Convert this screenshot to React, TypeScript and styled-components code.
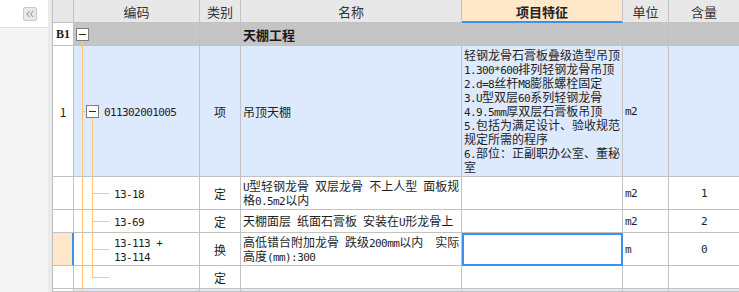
import React from "react";
import styled, { createGlobalStyle, css } from "styled-components";

const GlobalStyle = createGlobalStyle`
  html, body { margin: 0; padding: 0; background: #ffffff; overflow: hidden; }
  body { font-family: "Noto Sans CJK SC", "Noto Sans", sans-serif; font-size: 12px; color: #1e1e1e; }
  * { box-sizing: border-box; }
`;

const ORANGE = "#ffc773";
const LINE = "#c2c2c2";
const BLUE = "#3d8ff0";
const PEACH = "#ffe8c9";
const ROW_BLUE = "#dde9fc";
const GROUP_GRAY = "#c5c5c5";
const HEAD_GRAY = "#e8e8e8";

const Page = styled.div`
  display: flex;
  width: 739px;
  height: 292px;
  overflow: hidden;
`;

const LeftPanel = styled.div`
  flex: none;
  width: 48px;
  display: flex;
  flex-direction: column;
  background: #f5f5f5;
`;

const TopBar = styled.div`
  height: 28px;
  background: #ffffff;
  border-bottom: 1px solid #e3e3e3;
  display: flex;
  justify-content: flex-end;
  align-items: center;
  padding-right: 11px;
`;

const CollapseBtn = styled.div`
  width: 14px;
  height: 14px;
  border: 1px solid #c9c9c9;
  border-radius: 2px;
  background: #e8e8e8;
  display: flex;
  align-items: center;
  justify-content: center;
`;

const Splitter = styled.div`
  flex: none;
  width: 4px;
  background: #eaeaea;
`;

const Grid = styled.div`
  flex: none;
  width: 688px;
  border-left: 1px solid #bdbdbd;
  display: grid;
  grid-template-columns: 21px 126px 41px 221px 161px 46px 71px;
  grid-template-rows: 23px 23px 131px 33px 23px 33px 23px 1fr;
`;

const BaseCell = styled.div<{ $bg?: string }>`
  min-width: 0;
  overflow: hidden;
  border-right: 1px solid ${LINE};
  border-bottom: 1px solid ${LINE};
  background-color: ${(p) => p.$bg ?? "#ffffff"};
`;

const HeadCell = styled(BaseCell)<{ $active?: boolean }>`
  display: flex;
  align-items: center;
  justify-content: center;
  font-size: 13px;
  color: #333333;
  white-space: nowrap;
  ${(p) =>
    p.$active &&
    css`
      font-weight: bold;
      color: #222222;
      border-bottom-color: ${BLUE};
      box-shadow: inset 0 -1px 0 ${BLUE};
    `}
`;

const NumCell = styled(BaseCell)<{ $selected?: boolean; $bold?: boolean }>`
  display: flex;
  align-items: center;
  justify-content: center;
  font-size: 12px;
  ${(p) =>
    p.$bold &&
    css`
      font-family: "Liberation Serif", "DejaVu Serif", serif;
      font-weight: bold;
      font-size: 12px;
    `}
  ${(p) =>
    p.$selected &&
    css`
      border-right-color: ${BLUE};
      box-shadow: inset -1px 0 0 ${BLUE};
    `}
`;

type Tree = "root" | "item" | "child" | "last" | "trunk";

const lg = `linear-gradient(${ORANGE}, ${ORANGE})`;

const treeBg: Record<Tree, { pos: string; size: string; n: number }> = {
  root: { pos: "8px 100%", size: "1px calc(100% - 18px)", n: 1 },
  item: {
    pos: "8px 0, 8px 50%, 18px 100%",
    size: "1px 100%, 4px 1px, 1px calc(50% - 6px)",
    n: 3,
  },
  child: { pos: "8px 0, 18px 0, 18px 50%", size: "1px 100%, 1px 100%, 17px 1px", n: 3 },
  last: { pos: "8px 0, 18px 0, 18px 50%", size: "1px 100%, 1px 50%, 17px 1px", n: 3 },
  trunk: { pos: "8px 0", size: "1px 100%", n: 1 },
};

const CodeCell = styled(BaseCell)<{ $tree: Tree; $indent: number }>`
  display: flex;
  align-items: center;
  gap: 5px;
  padding-left: ${(p) => p.$indent}px;
  line-height: 13px;
  white-space: nowrap;
  background-repeat: no-repeat;
  background-image: ${(p) => Array(treeBg[p.$tree].n).fill(lg).join(", ")};
  background-position: ${(p) => treeBg[p.$tree].pos};
  background-size: ${(p) => treeBg[p.$tree].size};
`;

const MinusBox = styled.span`
  flex: none;
  width: 13px;
  height: 13px;
  border: 1px solid #7d7d7d;
  background: #ffffff;
  display: flex;
  align-items: center;
  justify-content: center;
  &::before {
    content: "";
    width: 7px;
    height: 1px;
    background: #2a2a2a;
  }
`;

const CenterCell = styled(BaseCell)`
  display: flex;
  align-items: center;
  justify-content: center;
  font-size: 12px;
`;

const UnitCell = styled(BaseCell)`
  display: flex;
  align-items: center;
  padding-left: 2px;
`;

const NameCell = styled(BaseCell)<{ $bold?: boolean }>`
  display: flex;
  flex-direction: column;
  justify-content: center;
  padding-left: 2px;
  line-height: 13px;
  white-space: pre;
  ${(p) =>
    p.$bold &&
    css`
      font-weight: bold;
      font-size: 13px;
      color: #1a1a1a;
    `}
`;

const FeatureCell = styled(BaseCell)<{ $selected?: boolean }>`
  padding: 2px 0 0 2px;
  line-height: 14px;
  white-space: pre;
  ${(p) =>
    p.$selected &&
    css`
      border-right-color: ${BLUE};
      border-bottom-color: ${BLUE};
      outline: 2px solid ${BLUE};
      outline-offset: -2px;
    `}
`;

const Line = styled.div`
  white-space: pre;
`;

const Asc = styled.span`
  font-family: "DejaVu Sans Mono", "Liberation Mono", monospace;
  font-size: 11px;
  letter-spacing: -0.6px;
  line-height: 1;
`;

function T({ s }: { s: string }) {
  const parts = s.split(/([\x20-\x7e]+)/);
  return (
    <>
      {parts.map((p, i) =>
        p === "" ? null : /[\x20-\x7e]/.test(p[0]) ? (
          <Asc key={i}>{p}</Asc>
        ) : (
          <span key={i}>{p}</span>
        )
      )}
    </>
  );
}

function Lines({ lines }: { lines: string[] }) {
  return (
    <>
      {lines.map((l, i) => (
        <Line key={i}>
          <T s={l} />
        </Line>
      ))}
    </>
  );
}

type Kind = "group" | "item" | "child" | "last" | "next";

interface RowData {
  kind: Kind;
  num: string;
  code: string[];
  type: string;
  name: string[];
  feature: string[];
  unit: string;
  qty: string;
  selected?: boolean;
}

const rows: RowData[] = [
  { kind: "group", num: "B1", code: [], type: "", name: ["天棚工程"], feature: [], unit: "", qty: "" },
  {
    kind: "item",
    num: "1",
    code: ["011302001005"],
    type: "项",
    name: ["吊顶天棚"],
    feature: [
      "轻钢龙骨石膏板叠级造型吊顶",
      "1.300*600排列轻钢龙骨吊顶",
      "2.d=8丝杆M8膨胀螺栓固定",
      "3.U型双层60系列轻钢龙骨",
      "4.9.5mm厚双层石膏板吊顶",
      "5.包括为满足设计、验收规范",
      "规定所需的程序",
      "6.部位：正副职办公室、董秘",
      "室",
    ],
    unit: "m2",
    qty: "",
  },
  {
    kind: "child",
    num: "",
    code: ["13-18"],
    type: "定",
    name: ["U型轻钢龙骨 双层龙骨 不上人型 面板规", "格0.5m2以内"],
    feature: [],
    unit: "m2",
    qty: "1",
  },
  {
    kind: "child",
    num: "",
    code: ["13-69"],
    type: "定",
    name: ["天棚面层 纸面石膏板 安装在U形龙骨上"],
    feature: [],
    unit: "m2",
    qty: "2",
  },
  {
    kind: "child",
    num: "",
    code: ["13-113 +", "13-114"],
    type: "换",
    name: ["高低错台附加龙骨 跌级200mm以内  实际", "高度(mm):300"],
    feature: [],
    unit: "m",
    qty: "0",
    selected: true,
  },
  { kind: "last", num: "", code: [], type: "定", name: [], feature: [], unit: "", qty: "" },
  { kind: "next", num: "", code: [], type: "", name: [], feature: [], unit: "", qty: "" },
];

const rowBg: Record<Kind, string> = {
  group: GROUP_GRAY,
  item: ROW_BLUE,
  child: "#ffffff",
  last: "#ffffff",
  next: ROW_BLUE,
};

const treeOf: Record<Kind, Tree> = {
  group: "root",
  item: "item",
  child: "child",
  last: "last",
  next: "trunk",
};

const indentOf: Record<Kind, number> = {
  group: 2,
  item: 12,
  child: 40,
  last: 40,
  next: 40,
};

const headers = ["", "编码", "类别", "名称", "项目特征", "单位", "含量"];

function ChevronsLeft() {
  return (
    <svg width="8" height="8" viewBox="0 0 8 8" fill="none" stroke="#8c8c8c" strokeWidth="1">
      <polyline points="3.5,1 0.8,4 3.5,7" />
      <polyline points="7.2,1 4.5,4 7.2,7" />
    </svg>
  );
}

export default function App() {
  return (
    <>
      <GlobalStyle />
      <Page>
        <LeftPanel>
          <TopBar>
            <CollapseBtn>
              <ChevronsLeft />
            </CollapseBtn>
          </TopBar>
        </LeftPanel>
        <Splitter />
        <Grid>
          {headers.map((h, i) => (
            <HeadCell key={"h" + i} $bg={i === 4 ? PEACH : HEAD_GRAY} $active={i === 4}>
              {h}
            </HeadCell>
          ))}
          {rows.map((r, ri) => {
            const bg = rowBg[r.kind];
            return (
              <React.Fragment key={ri}>
                <NumCell
                  $bg={r.selected ? PEACH : "#ffffff"}
                  $selected={r.selected}
                  $bold={r.kind === "group"}
                >
                  {r.num}
                </NumCell>
                <CodeCell $bg={bg} $tree={treeOf[r.kind]} $indent={indentOf[r.kind]}>
                  {(r.kind === "group" || r.kind === "item") && <MinusBox />}
                  {r.code.length > 0 && (
                    <div>
                      <Lines lines={r.code} />
                    </div>
                  )}
                </CodeCell>
                <CenterCell $bg={bg}>{r.type}</CenterCell>
                <NameCell $bg={bg} $bold={r.kind === "group"}>
                  <Lines lines={r.name} />
                </NameCell>
                <FeatureCell $bg={bg} $selected={r.selected}>
                  <Lines lines={r.feature} />
                </FeatureCell>
                <UnitCell $bg={bg}>
                  <T s={r.unit} />
                </UnitCell>
                <CenterCell $bg={bg}>
                  <T s={r.qty} />
                </CenterCell>
              </React.Fragment>
            );
          })}
        </Grid>
      </Page>
    </>
  );
}
